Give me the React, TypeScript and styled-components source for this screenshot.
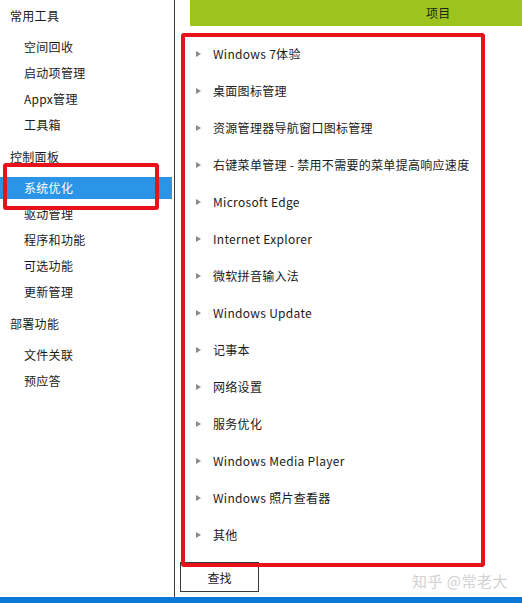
import React from "react";
import styled, { createGlobalStyle } from "styled-components";

const GlobalStyle = createGlobalStyle`
  html, body {
    margin: 0;
    padding: 0;
    background: #ffffff;
  }
  body {
    font-family: "Noto Sans CJK SC", "Noto Sans", sans-serif;
    font-size: 12px;
    letter-spacing: 0.3px;
    color: #1a1a1a;
    overflow: hidden;
  }
`;

const Window = styled.div`
  position: relative;
  width: 522px;
  height: 603px;
  display: flex;
  flex-direction: column;
  overflow: hidden;
`;

const Main = styled.div`
  flex: 1;
  display: flex;
  min-height: 0;
`;

const Sidebar = styled.nav`
  width: 172px;
  padding: 5px 2px 0 0;
  border-right: 1px solid #3a3a3a;
  display: flex;
  flex-direction: column;
  gap: 10px;
`;

const Group = styled.div`
  display: flex;
  flex-direction: column;
  gap: 4px;
`;

const GroupTitle = styled.div`
  height: 22px;
  line-height: 22px;
  padding-left: 10px;
  margin-bottom: 5px;
`;

const NavItem = styled.div<{ $active?: boolean }>`
  height: 22px;
  line-height: 22px;
  padding-left: 24px;
  background: ${(p) => (p.$active ? "#2a95e6" : "transparent")};
  color: ${(p) => (p.$active ? "#ffffff" : "#1a1a1a")};
`;

const Content = styled.section`
  flex: 1;
  display: flex;
  flex-direction: column;
  min-width: 0;
`;

const ColumnHeader = styled.div`
  margin-left: 15px;
  height: 26px;
  line-height: 26px;
  background: #9dc41d;
  padding-left: 236px;
  color: #222;
`;

const List = styled.ul`
  list-style: none;
  margin: 9px 0 0;
  padding: 0;
`;

const Row = styled.li`
  height: 37px;
  display: flex;
  align-items: center;
  padding-left: 21px;
  gap: 12px;
`;

const Caret = styled.span`
  width: 0;
  height: 0;
  border-top: 3.5px solid transparent;
  border-bottom: 3.5px solid transparent;
  border-left: 5px solid #8a8a8a;
`;

const FindButton = styled.button`
  margin: 9px 0 0 5px;
  width: 79px;
  height: 30px;
  border: 1px solid #3a3a3a;
  background: #ffffff;
  font: inherit;
  color: #1a1a1a;
  padding: 0;
`;

const TaskBar = styled.div`
  height: 6px;
  background: #0a78d4;
`;

const Annotation = styled.div`
  position: absolute;
  border: 4.5px solid #e8121a;
  border-radius: 3px;
  pointer-events: none;
`;

const Watermark = styled.div`
  position: absolute;
  left: 412px;
  top: 570px;
  font-size: 15px;
  color: #d2d2d2;
  letter-spacing: 0.5px;
`;

const groups = [
  { title: "常用工具", items: ["空间回收", "启动项管理", "Appx管理", "工具箱"] },
  { title: "控制面板", items: ["系统优化", "驱动管理", "程序和功能", "可选功能", "更新管理"] },
  { title: "部署功能", items: ["文件关联", "预应答"] },
];

const rows = [
  "Windows 7体验",
  "桌面图标管理",
  "资源管理器导航窗口图标管理",
  "右键菜单管理 - 禁用不需要的菜单提高响应速度",
  "Microsoft Edge",
  "Internet Explorer",
  "微软拼音输入法",
  "Windows Update",
  "记事本",
  "网络设置",
  "服务优化",
  "Windows Media Player",
  "Windows 照片查看器",
  "其他",
];

export default function App() {
  return (
    <Window>
      <GlobalStyle />
      <Main>
        <Sidebar>
          {groups.map((g) => (
            <Group key={g.title}>
              <GroupTitle>{g.title}</GroupTitle>
              {g.items.map((it) => (
                <NavItem key={it} $active={it === "系统优化"}>
                  {it}
                </NavItem>
              ))}
            </Group>
          ))}
        </Sidebar>
        <Content>
          <ColumnHeader>项目</ColumnHeader>
          <List>
            {rows.map((r) => (
              <Row key={r}>
                <Caret />
                <span>{r}</span>
              </Row>
            ))}
          </List>
          <FindButton>查找</FindButton>
        </Content>
      </Main>
      <TaskBar />
      <Annotation style={{ left: 3, top: 163, width: 148, height: 39 }} />
      <Annotation style={{ left: 181, top: 33, width: 296, height: 526 }} />
      <Watermark>知乎 @常老大</Watermark>
    </Window>
  );
}
